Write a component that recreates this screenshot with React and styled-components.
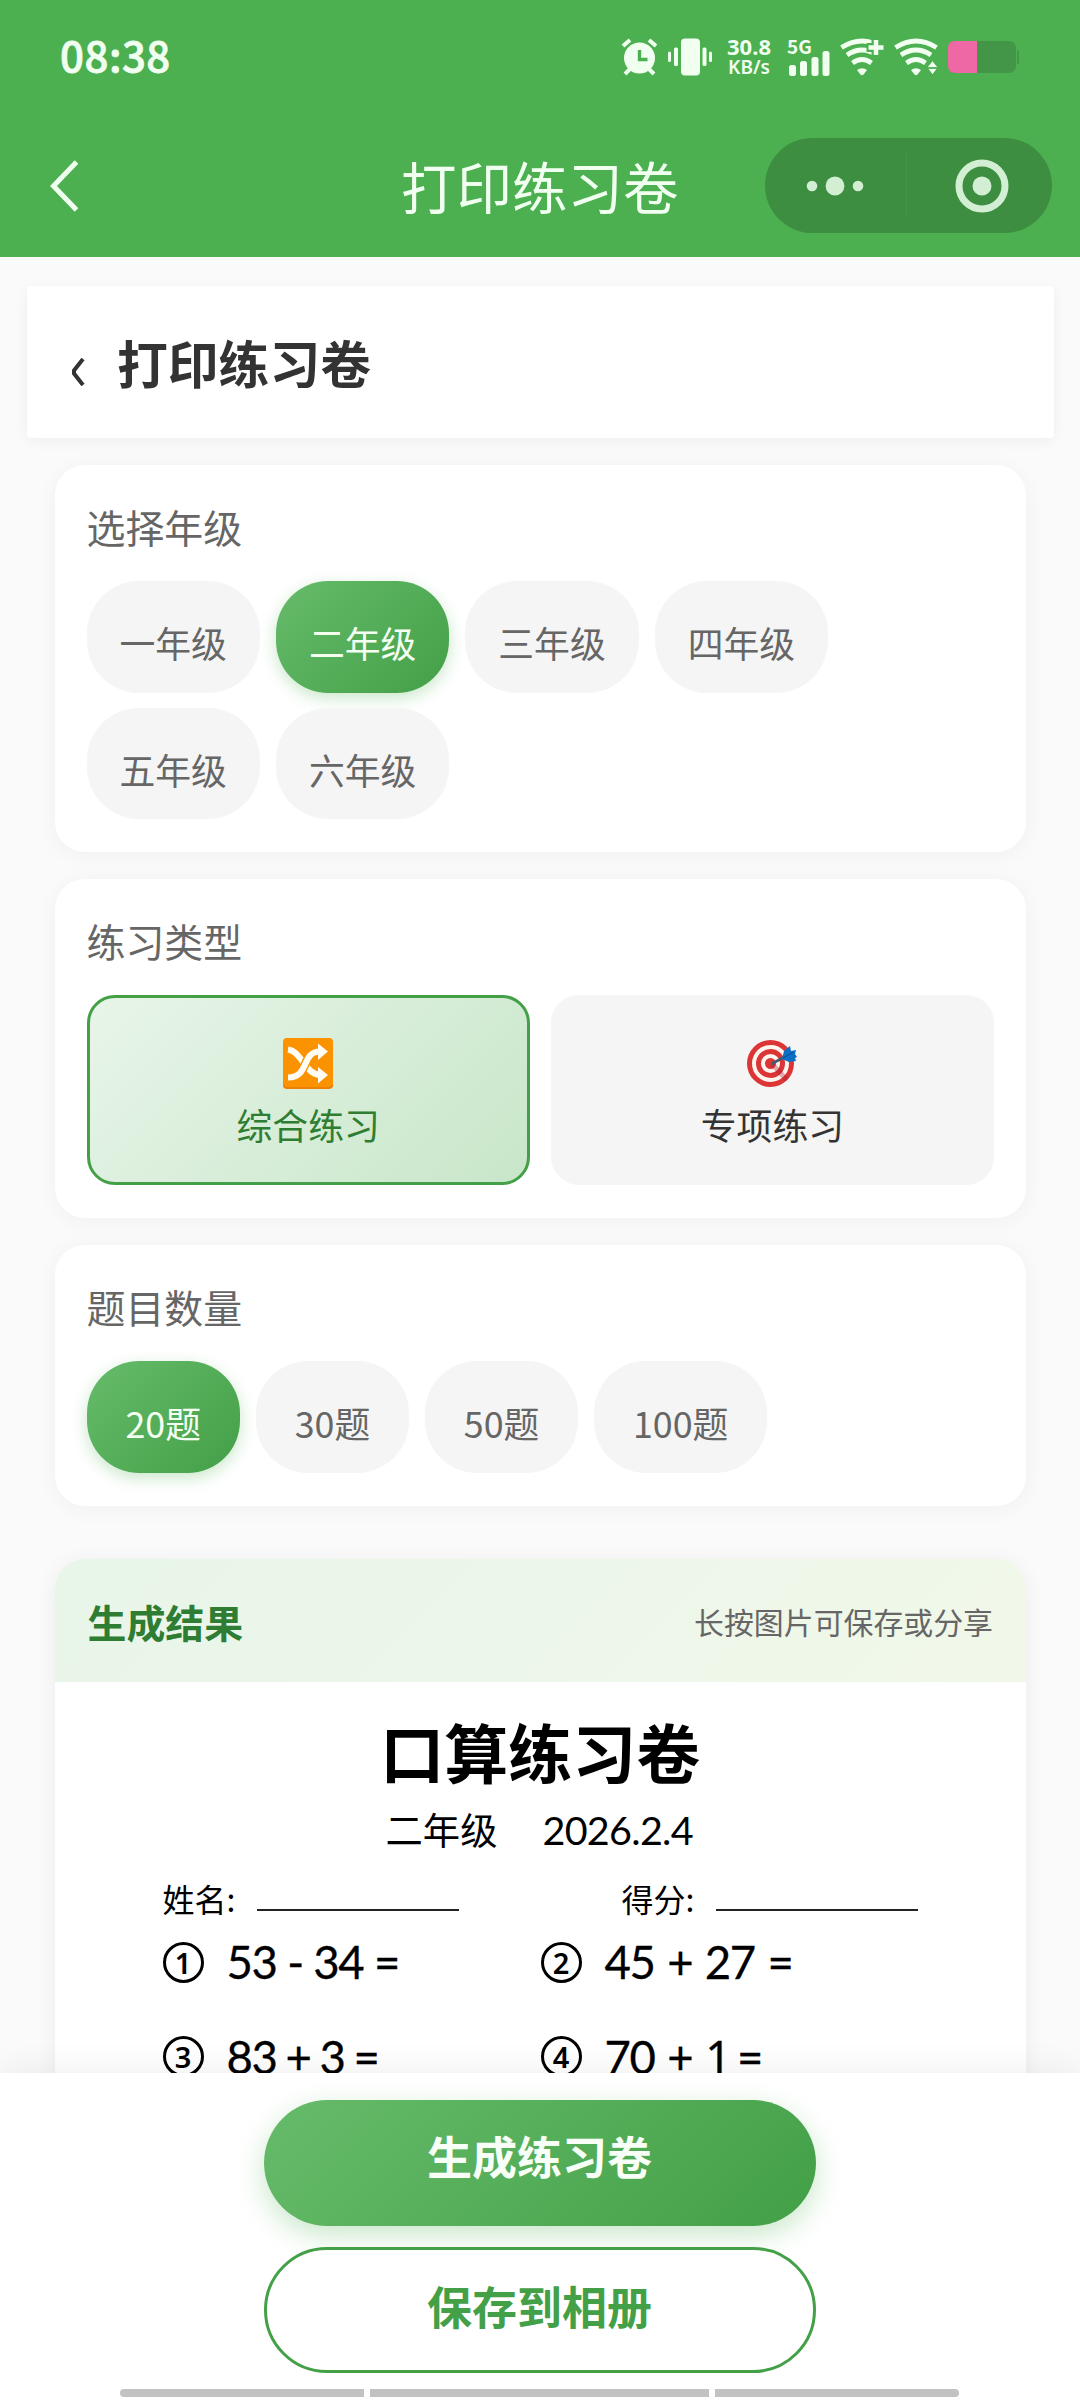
import React from 'react'
import styled, { createGlobalStyle, css } from 'styled-components'

const GlobalStyle = createGlobalStyle`
  * {
    box-sizing: border-box;
  }

  body {
    margin: 0;
    background: #fafafa;
    font-family: 'Noto Sans CJK SC', 'Noto Sans', sans-serif;
  }

  button {
    border: 0;
    padding: 0;
    background: none;
    font-family: inherit;
  }
`

const Page = styled.div`
  display: flex;
  flex-direction: column;
  width: 1080px;
  height: 2400px;
  overflow: hidden;
  background: #fafafa;
`

/* status bar + nav */

const TopBar = styled.header`
  flex: none;
  height: 257px;
  background: #4caf50;
  color: #f1fff0;
`

const StatusBar = styled.div`
  display: flex;
  align-items: center;
  justify-content: space-between;
  height: 114px;
  padding: 0 61px 0 60px;
`

const Time = styled.span`
  margin-top: -6px;
  font-size: 42px;
  font-weight: 500;
  line-height: 60px;
  letter-spacing: 0.5px;
  -webkit-text-stroke: 0.8px currentColor;
`

const StatusIcons = styled.div`
  display: flex;
  align-items: center;

  svg {
    display: block;
    overflow: visible;
  }
`

const Speed = styled.div`
  display: flex;
  flex-direction: column;
  align-items: center;
  width: 48px;
  margin: -1px 14px 0 13px;
  font-family: 'Noto Sans', sans-serif;
  font-size: 22px;
  font-weight: 700;
  line-height: 21px;
  white-space: nowrap;

  small {
    font-size: 19px;
    font-weight: 600;
    line-height: 21px;
  }
`

const NavBar = styled.div`
  display: grid;
  grid-template-columns: 1fr auto 1fr;
  align-items: center;
  height: 143px;
  padding: 0 28px 0 49.5px;
`

const NavTitle = styled.h1`
  margin: -2px 0 0 -22px;
  font-size: 55.5px;
  font-weight: 400;
  line-height: 80px;
`

const Capsule = styled.div`
  justify-self: end;
  display: flex;
  align-items: center;
  width: 287px;
  height: 95px;
  border-radius: 48px;
  background: #3d8e40;
`

const CapsuleDivider = styled.i`
  width: 1px;
  height: 64px;
  background: #46964a;
`

const CapsuleButton = styled.button`
  display: flex;
  flex: 1;
  justify-content: center;

  & + ${CapsuleDivider} + & {
    padding-left: 5px;
  }
`

/* content */

const Content = styled.main`
  flex: 1;
  min-height: 0;
  overflow: hidden;
  padding: 29px 26px 0 27px;
`

const PageTitle = styled.div`
  display: flex;
  align-items: center;
  height: 152px;
  padding-left: 44px;
  border-radius: 4px;
  background: #fff;
  box-shadow: 0 3px 14px rgba(0, 0, 0, 0.05);

  svg {
    margin: 20px 32px 0 0;
  }

  h2 {
    margin: 0;
    color: #333;
    font-size: 50.8px;
    font-weight: 700;
    line-height: 74px;
  }
`

const Cards = styled.div`
  display: flex;
  flex-direction: column;
  gap: 27px;
  padding: 27px 28px 0 27.5px;
`

const Card = styled.section`
  padding: 32px 32px 33px;
  border-radius: 30px;
  background: #fff;
  box-shadow: 0 3px 22px rgba(0, 0, 0, 0.045);
`

const CardTitle = styled.h3`
  margin: 0 0 25px;
  color: #666;
  font-size: 38.9px;
  font-weight: 400;
  line-height: 59px;
`

const Pills = styled.div`
  display: flex;
  flex-wrap: wrap;
  gap: 15px ${p => p.$gap}px;
`

const Pill = styled.button`
  height: 111.5px;
  padding: 10.5px ${p => p.$pad}px 0;
  border-radius: 52px;
  background: #f5f5f5;
  color: #666;
  font-size: 35.8px;
  line-height: 52px;

  ${p =>
    p.$active &&
    css`
      background: linear-gradient(135deg, #66bb6a, #43a047);
      color: #f4fff2;
      box-shadow: 0 5px 16px rgba(76, 175, 80, 0.3);
    `}
`

const Types = styled.div`
  display: grid;
  grid-template-columns: 1fr 1fr;
  gap: 21px;
`

const TypeOption = styled.button`
  display: flex;
  flex-direction: column;
  align-items: center;
  height: 190px;
  padding-top: 40px;
  border: 3px solid ${p => (p.$active ? '#43a047' : '#f5f5f5')};
  border-radius: 28px;
  background: ${p =>
    p.$active ? 'linear-gradient(135deg, #e8f5e9, #c8e6c9)' : '#f5f5f5'};
  color: ${p => (p.$active ? '#2e7d32' : '#333')};
  font-size: 35.8px;
  line-height: 52px;

  svg {
    display: block;
    margin-bottom: 9px;
  }
`

const Result = styled.section`
  margin-top: 26px;
  border-radius: 30px 30px 0 0;
  overflow: hidden;
  background: #fff;
  box-shadow: 0 3px 22px rgba(0, 0, 0, 0.06);
`

const ResultHead = styled.div`
  display: flex;
  align-items: center;
  justify-content: space-between;
  height: 123px;
  padding: 1px 33px 0;
  background: linear-gradient(135deg, #e8f5e9, #f1f8e9);

  h3 {
    margin: 0;
    color: #2e7d32;
    font-size: 38.9px;
    font-weight: 700;
    line-height: 56px;
  }

  span {
    color: #666;
    font-size: 29.9px;
  }
`

/* generated worksheet */

const Sheet = styled.div`
  height: 900px;
  padding: 22px 0 0 108px;
  color: #000;
`

const SheetTitle = styled.h2`
  margin: 0 0 6px -108px;
  font-size: 64px;
  font-weight: 700;
  line-height: 92px;
  text-align: center;
`

const SheetMeta = styled.div`
  display: flex;
  align-items: center;
  justify-content: center;
  gap: 45px;
  margin: 0 0 19px -110px;
  font-size: 37.3px;
  line-height: 54px;

  time {
    margin-top: 1px;
    font-family: Lato, sans-serif;
    font-size: 39.5px;
    line-height: 53px;
    letter-spacing: -0.7px;
  }
`

const SheetFields = styled.div`
  display: flex;
  gap: 163px;
  margin-bottom: 21px;
`

const Field = styled.div`
  display: flex;
  align-items: flex-end;
  font-size: 32px;
  line-height: 46px;

  span {
    width: 94px;
  }

  i {
    width: 202px;
    height: 2px;
    margin-bottom: 10px;
    background: #222;
  }
`

const Problems = styled.div`
  display: grid;
  grid-template-columns: 378px 378px;
  row-gap: 53.7px;
`

const Problem = styled.div`
  display: flex;
  align-items: center;
  height: 41px;
`

const Badge = styled.b`
  display: flex;
  align-items: center;
  justify-content: center;
  width: 41px;
  height: 41px;
  margin-right: 23px;
  border: 3px solid #000;
  border-radius: 50%;
  font-family: 'Noto Sans', sans-serif;
  font-size: 29px;
  font-weight: 600;
  line-height: 35px;
`

const Expression = styled.span`
  font-family: Lato, sans-serif;
  font-size: 45.5px;
  line-height: 44px;
  letter-spacing: -1.4px;
  word-spacing: ${p => p.$spacing}px;
  white-space: nowrap;
  -webkit-text-stroke: 0.3px currentColor;
`

// a "1" without the foot serif
const PlainOne = styled.span`
  font-family: 'Noto Sans', sans-serif;
  letter-spacing: -7px;
`

/* bottom actions */

const Footer = styled.footer`
  position: relative;
  display: flex;
  flex: none;
  flex-direction: column;
  align-items: center;
  gap: 21px;
  height: 327.5px;
  padding: 27px 1px 0 0;
  background: #fff;
  box-shadow: 0 -5px 30px rgba(0, 0, 0, 0.06);
`

const Action = styled.button`
  width: 552px;
  height: 126px;
  border-radius: 63px;
  font-size: 45px;
  font-weight: 700;
  line-height: 66px;

  ${p =>
    p.$primary
      ? css`
          padding-bottom: 14px;
          background: linear-gradient(135deg, #66bb6a, #43a047);
          color: #f7fff6;
          box-shadow: 0 9px 28px rgba(76, 175, 80, 0.3);
        `
      : css`
          padding-bottom: 8px;
          border: 3px solid #43a047;
          background: #fff;
          color: #43a047;
        `}
`

const SystemNav = styled.div`
  display: grid;
  grid-template-columns: 244px 339px 244px;
  gap: 6px;
  margin-top: -4.5px;

  i {
    height: 8px;
    background: #c2c2c2;
  }

  i:first-child {
    border-radius: 4px 0 0 4px;
  }

  i:last-child {
    border-radius: 0 4px 4px 0;
  }
`

const SideIcon = styled.svg`
  margin-left: ${p => p.$gap || 10}px;
`

const AlarmIcon = () => (
  <svg width="37" height="38" viewBox="0 0 37 38" fill="none">
    <circle cx="18.5" cy="20" r="15.5" fill="currentColor" />
    <path
      d="M2 8l7-6M35 8l-7-6M4 36l5-5M33 36l-5-5"
      stroke="currentColor"
      strokeWidth="4"
    />
    <path d="M18.5 12v9.5h8" stroke="#4caf50" strokeWidth="3.4" />
  </svg>
)

const VibrateIcon = () => (
  <SideIcon width="44" height="38" viewBox="0 0 44 38" fill="currentColor">
    <rect x="13" y="0.5" width="19" height="37" rx="4" />
    <rect x="6" y="9.5" width="4" height="18.5" rx="1.5" />
    <rect x="34.5" y="9.5" width="4" height="18.5" rx="1.5" />
    <rect x="0" y="13.5" width="3" height="10.5" rx="1.5" />
    <rect x="41" y="13.5" width="3" height="10.5" rx="1.5" />
  </SideIcon>
)

const SignalIcon = () => (
  <svg width="43" height="38" viewBox="0 0 43 38" fill="currentColor">
    <text x="0" y="15.5" fontSize="19" fontWeight="700">
      5G
    </text>
    <rect x="2" y="27" width="7" height="11" rx="2.5" />
    <rect x="13" y="23" width="7" height="15" rx="2.5" />
    <rect x="24.5" y="19" width="7" height="19" rx="2.5" />
    <rect x="35.5" y="13" width="7" height="25" rx="2.5" />
  </svg>
)

const WifiArcs = () => (
  <g>
    <path
      d="M1.5 9.5Q22 -3.5 42.5 9.5M7 17Q22 7 37 17M12.5 25Q22 18 31.5 25"
      fill="none"
      stroke="currentColor"
      strokeWidth="4.8"
    />
    <path
      d="M17 32Q22 28.5 27 32L23.5 36.5Q22 38 20.5 36.5Z"
      fill="currentColor"
    />
  </g>
)

const WifiPlusIcon = () => (
  <SideIcon width="44" height="38" viewBox="0 0 44 38">
    <WifiArcs />
    <path d="M36 1v18M26.5 9.5h20" stroke="#4caf50" strokeWidth="9" />
    <path d="M36 2v15M28.5 9.5h15" stroke="currentColor" strokeWidth="4.5" />
  </SideIcon>
)

const WifiIcon = () => (
  <SideIcon width="45" height="38" viewBox="0 0 45 38">
    <WifiArcs />
    <path
      d="M38.5 22l6 7.5-6 8-6-8z"
      fill="currentColor"
      stroke="#4caf50"
      strokeWidth="1.5"
    />
    <path d="M32 30h13" stroke="#4caf50" strokeWidth="1.8" />
  </SideIcon>
)

const BatteryIcon = () => (
  <SideIcon $gap={9} width="71" height="32" viewBox="0 0 71 32">
    <rect width="68" height="32" rx="7" fill="#439647" />
    <path d="M7 0H29V32H7Q0 32 0 25V7Q0 0 7 0Z" fill="#ee68a5" />
    <rect x="69" y="9" width="2" height="14" rx="1" fill="#439647" />
  </SideIcon>
)

const ShuffleIcon = () => (
  <svg width="50" height="51" viewBox="0 0 50 51" fill="none">
    <rect width="50" height="51" rx="4" fill="#fb9300" />
    <path d="M1 47q0 3 4 3h40q4 0 4-3" stroke="#e67d08" strokeWidth="1.5" />
    <path
      d="M5 11.5c7 1 10 6 14 11 6 8 9 13 18 14.5"
      stroke="#fffdf3"
      strokeWidth="6.2"
    />
    <path
      d="M5 39.5c22 0 13-26 32-26"
      stroke="#fb9300"
      strokeWidth="9"
    />
    <path
      d="M5 39.5c22 0 13-26 32-26"
      stroke="#fffdf3"
      strokeWidth="6.2"
    />
    <path d="M35 5.5l10 8-10 8.5zM35 29l10 8-10 8.5z" fill="#fffdf3" />
  </svg>
)

const TargetIcon = () => (
  <svg width="50" height="51" viewBox="0 0 50 51" fill="none">
    <circle cx="23.5" cy="25.5" r="23.5" fill="#dc3535" />
    <circle cx="23.5" cy="25.5" r="16.5" stroke="#fff5ef" strokeWidth="4" />
    <circle cx="23.5" cy="25.5" r="7.5" stroke="#fff5ef" strokeWidth="4" />
    <path d="M25 26L40 42" stroke="#a81e35" strokeWidth="5" opacity="0.35" />
    <path d="M24.5 26L39 18" stroke="#435a70" strokeWidth="2.6" />
    <path d="M35 21l2-8 6-5 1 5 5-1-1 4 2 3-2 1 1 3-7 1z" fill="#0b6fc4" />
    <path d="M36 20l10-5.5" stroke="#074b91" />
  </svg>
)

const grades = ['一年级', '二年级', '三年级', '四年级', '五年级', '六年级']
const counts = ['20题', '30题', '50题', '100题']

const problems = [
  { text: '53 - 34 =', spacing: 0.4 },
  { text: '45 + 27 =', spacing: 2.4 },
  { text: '83 + 3 =', spacing: -1.2 },
  { text: (<>70 + <PlainOne>1</PlainOne> =</>), spacing: 2.6 },
]

const App = () => (
  <Page>
    <GlobalStyle />
    <TopBar>
      <StatusBar>
        <Time>08:38</Time>
        <StatusIcons>
          <AlarmIcon />
          <VibrateIcon />
          <Speed>
            30.8
            <small>KB/s</small>
          </Speed>
          <SignalIcon />
          <WifiPlusIcon />
          <WifiIcon />
          <BatteryIcon />
        </StatusIcons>
      </StatusBar>
      <NavBar>
        <svg width="29" height="52" viewBox="0 0 29 52" fill="none">
          <path d="M26.5 2L3.5 26L26.5 50" stroke="currentColor" strokeWidth="5" />
        </svg>
        <NavTitle>打印练习卷</NavTitle>
        <Capsule>
          <CapsuleButton>
            <svg width="58" height="20" viewBox="0 0 58 20" fill="#d3efd3">
              <circle cx="6" cy="10" r="5.3" />
              <circle cx="29" cy="10" r="9.4" />
              <circle cx="52" cy="10" r="5.3" />
            </svg>
          </CapsuleButton>
          <CapsuleDivider />
          <CapsuleButton>
            <svg width="54" height="54" viewBox="0 0 54 54" fill="none">
              <circle cx="27" cy="27" r="23" stroke="#d3efd3" strokeWidth="7" />
              <circle cx="27" cy="27" r="9.5" fill="#d3efd3" />
            </svg>
          </CapsuleButton>
        </Capsule>
      </NavBar>
    </TopBar>

    <Content>
      <PageTitle>
        <svg width="14" height="28" viewBox="0 0 14 28" fill="none">
          <path d="M12 1L3 12.5V15.5L12 27" stroke="#333" strokeWidth="4" />
        </svg>
        <h2>打印练习卷</h2>
      </PageTitle>

      <Cards>
        <Card>
          <CardTitle>选择年级</CardTitle>
          <Pills $gap={16}>
            {grades.map((grade, i) => (
              <Pill key={grade} $pad={33} $active={i === 1}>
                {grade}
              </Pill>
            ))}
          </Pills>
        </Card>

        <Card>
          <CardTitle>练习类型</CardTitle>
          <Types>
            <TypeOption $active>
              <ShuffleIcon />
              综合练习
            </TypeOption>
            <TypeOption>
              <TargetIcon />
              专项练习
            </TypeOption>
          </Types>
        </Card>

        <Card>
          <CardTitle>题目数量</CardTitle>
          <Pills $gap={15.6}>
            {counts.map((count, i) => (
              <Pill key={count} $pad={39} $active={i === 0}>
                {count}
              </Pill>
            ))}
          </Pills>
        </Card>

        <Result>
          <ResultHead>
            <h3>生成结果</h3>
            <span>长按图片可保存或分享</span>
          </ResultHead>
          <Sheet>
            <SheetTitle>口算练习卷</SheetTitle>
            <SheetMeta>
              <span>二年级</span>
              <time>2026.2.4</time>
            </SheetMeta>
            <SheetFields>
              <Field>
                <span>姓名:</span>
                <i />
              </Field>
              <Field>
                <span>得分:</span>
                <i />
              </Field>
            </SheetFields>
            <Problems>
              {problems.map(({ text, spacing }, i) => (
                <Problem key={i}>
                  <Badge>{i + 1}</Badge>
                  <Expression $spacing={spacing}>{text}</Expression>
                </Problem>
              ))}
            </Problems>
          </Sheet>
        </Result>
      </Cards>
    </Content>

    <Footer>
      <Action $primary>生成练习卷</Action>
      <Action>保存到相册</Action>
      <SystemNav>
        <i />
        <i />
        <i />
      </SystemNav>
    </Footer>
  </Page>
)

export default App
